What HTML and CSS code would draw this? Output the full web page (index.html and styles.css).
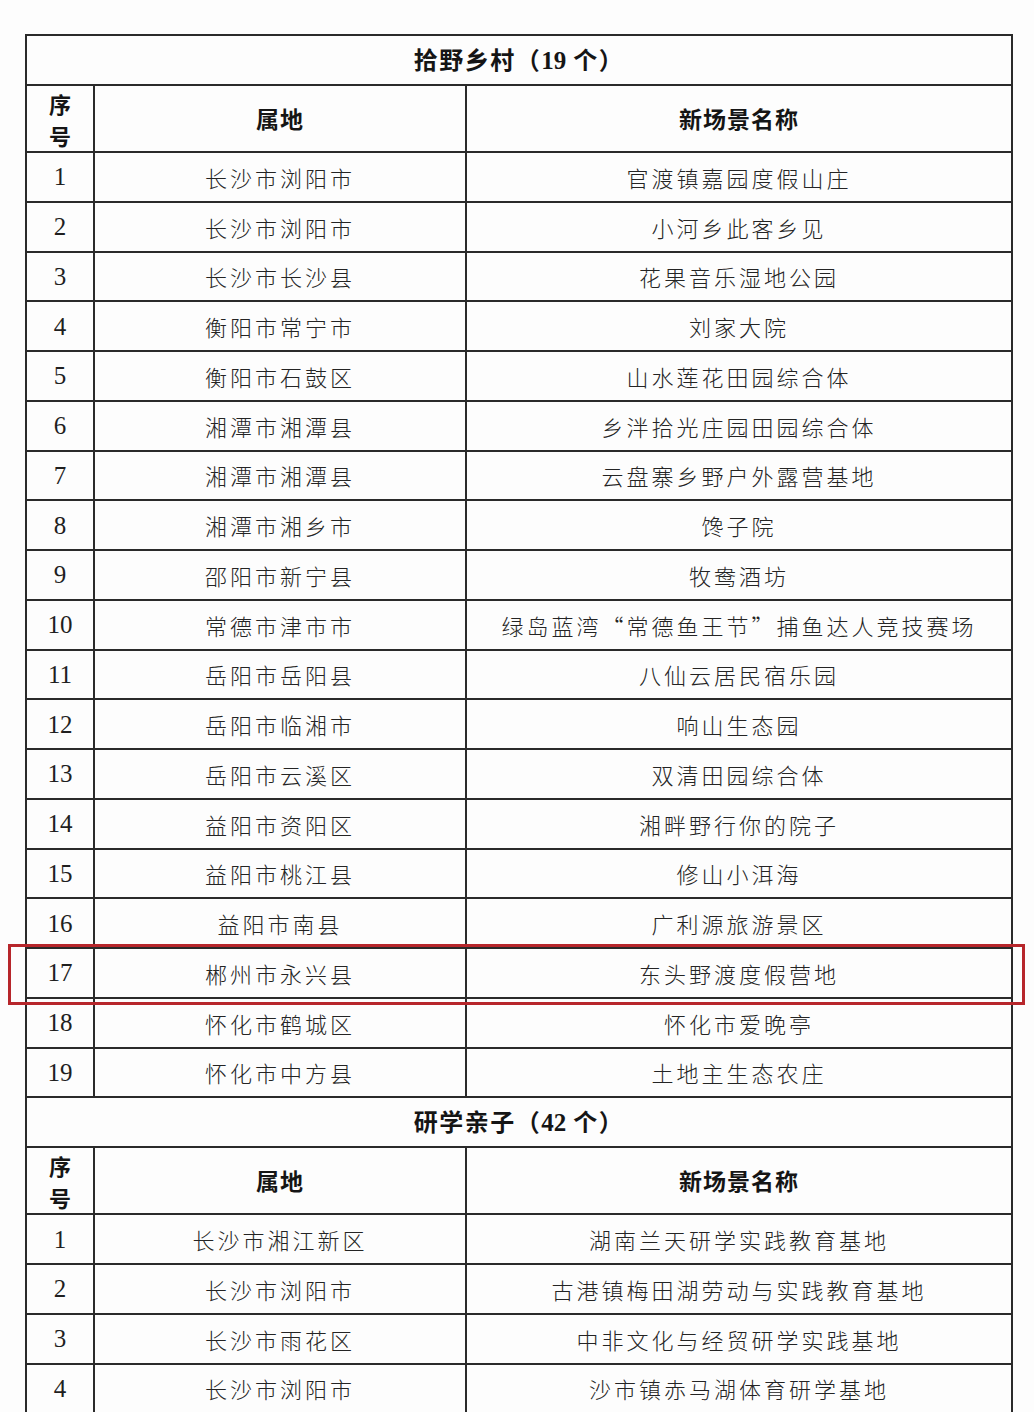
FILE: index.html
```html
<!DOCTYPE html>
<html lang="zh-CN">
<head>
<meta charset="utf-8">
<title>新场景名单</title>
<link rel="stylesheet" href="styles.css">
</head>
<body>
<div class="sheet">
  <table class="list">
    <colgroup><col class="c-no"><col class="c-area"><col class="c-name"></colgroup>
    <tbody>
      <tr class="title"><td colspan="3">拾野乡村（<span class="tnum">19</span> 个）</td></tr>
      <tr class="head"><td class="seq"><span>序</span><span>号</span></td><td>属地</td><td>新场景名称</td></tr>
      <tr><td class="n">1</td><td>长沙市浏阳市</td><td>官渡镇嘉园度假山庄</td></tr>
      <tr><td class="n">2</td><td>长沙市浏阳市</td><td>小河乡此客乡见</td></tr>
      <tr><td class="n">3</td><td>长沙市长沙县</td><td>花果音乐湿地公园</td></tr>
      <tr><td class="n">4</td><td>衡阳市常宁市</td><td>刘家大院</td></tr>
      <tr><td class="n">5</td><td>衡阳市石鼓区</td><td>山水莲花田园综合体</td></tr>
      <tr><td class="n">6</td><td>湘潭市湘潭县</td><td>乡泮拾光庄园田园综合体</td></tr>
      <tr><td class="n">7</td><td>湘潭市湘潭县</td><td>云盘寨乡野户外露营基地</td></tr>
      <tr><td class="n">8</td><td>湘潭市湘乡市</td><td>馋子院</td></tr>
      <tr><td class="n">9</td><td>邵阳市新宁县</td><td>牧鸯酒坊</td></tr>
      <tr><td class="n">10</td><td>常德市津市市</td><td>绿岛蓝湾“常德鱼王节”捕鱼达人竞技赛场</td></tr>
      <tr><td class="n">11</td><td>岳阳市岳阳县</td><td>八仙云居民宿乐园</td></tr>
      <tr><td class="n">12</td><td>岳阳市临湘市</td><td>响山生态园</td></tr>
      <tr><td class="n">13</td><td>岳阳市云溪区</td><td>双清田园综合体</td></tr>
      <tr><td class="n">14</td><td>益阳市资阳区</td><td>湘畔野行你的院子</td></tr>
      <tr><td class="n">15</td><td>益阳市桃江县</td><td>修山小洱海</td></tr>
      <tr><td class="n">16</td><td>益阳市南县</td><td>广利源旅游景区</td></tr>
      <tr><td class="n">17</td><td>郴州市永兴县</td><td>东头野渡度假营地</td></tr>
      <tr><td class="n">18</td><td>怀化市鹤城区</td><td>怀化市爱晚亭</td></tr>
      <tr><td class="n">19</td><td>怀化市中方县</td><td>土地主生态农庄</td></tr>
      <tr class="title"><td colspan="3">研学亲子（<span class="tnum">42</span> 个）</td></tr>
      <tr class="head"><td class="seq"><span>序</span><span>号</span></td><td>属地</td><td>新场景名称</td></tr>
      <tr><td class="n">1</td><td>长沙市湘江新区</td><td>湖南兰天研学实践教育基地</td></tr>
      <tr><td class="n">2</td><td>长沙市浏阳市</td><td>古港镇梅田湖劳动与实践教育基地</td></tr>
      <tr><td class="n">3</td><td>长沙市雨花区</td><td>中非文化与经贸研学实践基地</td></tr>
      <tr><td class="n">4</td><td>长沙市浏阳市</td><td>沙市镇赤马湖体育研学基地</td></tr>
    </tbody>
  </table>
  <div class="mark" aria-hidden="true"></div>
</div>
</body>
</html>
```
FILE: styles.css
```css
html, body {
  margin: 0;
  padding: 0;
  background: #fdfdfd;
}
body {
  width: 1034px;
  height: 1412px;
  overflow: hidden;
  font-family: "Noto Sans CJK SC", "Liberation Serif", serif;
  color: #242424;
}
.sheet {
  position: relative;
  padding: 34px 0 0 25px;
}
.list {
  border-collapse: collapse;
  table-layout: fixed;
  width: 986px;
}
.c-no { width: 68px; }
.c-area { width: 372px; }
.c-name { width: 546px; }
.list td {
  border: 2px solid #2a2a2a;
  text-align: center;
  vertical-align: middle;
  padding: 0;
  font-size: 22px;
  font-weight: 300;
  letter-spacing: 3px;
  height: 47.75px;
  line-height: 1;
  white-space: nowrap;
}
.list td.n {
  font-family: "Liberation Serif", serif;
  font-size: 25px;
  font-weight: 400;
  letter-spacing: 0;
  color: #1f1f1f;
}
.list tr.title td {
  height: 48px;
  font-weight: 700;
  font-size: 24px;
  letter-spacing: 1.5px;
  color: #151515;
}
.tnum {
  font-family: "Liberation Serif", serif;
  font-weight: 700;
  font-size: 25px;
  letter-spacing: 0;
}
.list tr.head td {
  height: 65px;
  font-weight: 700;
  font-size: 23px;
  letter-spacing: 1px;
  color: #151515;
}
.list tr.head td.seq {
  font-size: 22px;
  letter-spacing: 0;
}
.seq span {
  display: block;
  line-height: 32px;
}
.mark {
  position: absolute;
  left: 8px;
  top: 944px;
  width: 1011px;
  height: 55px;
  border: 3px solid #b7262b;
  pointer-events: none;
}
```
